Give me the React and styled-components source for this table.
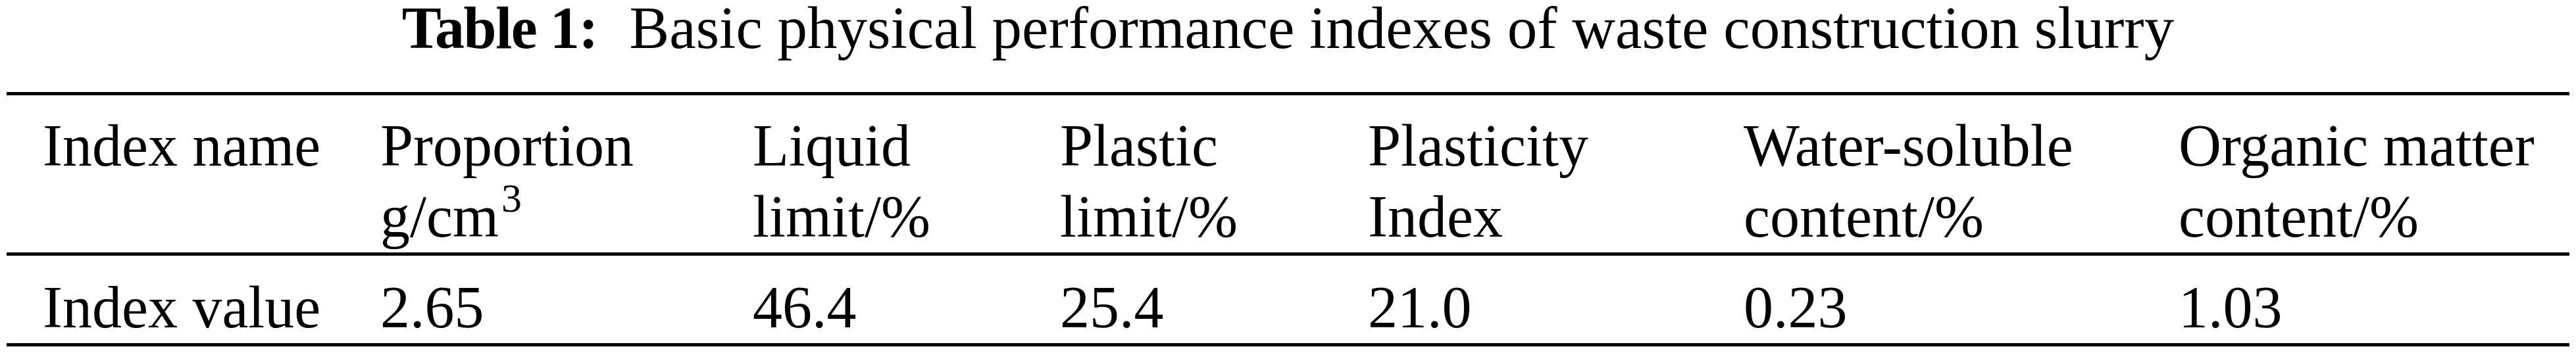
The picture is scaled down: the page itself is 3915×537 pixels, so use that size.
import React from 'react';
import styled, { createGlobalStyle } from 'styled-components';

const GlobalStyle = createGlobalStyle`
  html, body {
    margin: 0;
    padding: 0;
    background: #ffffff;
  }

  body {
    font-family: "Liberation Serif", "Times New Roman", serif;
    color: #000000;
  }
`;

const Page = styled.div`
  width: 3915px;
  height: 537px;
  background: #ffffff;
  overflow: hidden;
`;

const Caption = styled.div`
  font-size: 91px;
  line-height: 86px;
  text-align: center;
  white-space: pre;
  margin-bottom: 54px;
`;

const CaptionLabel = styled.span`
  font-weight: bold;
  font-size: 90px;
  letter-spacing: -1.5px;
  margin-right: 3px;
`;

const Table = styled.div`
  margin: 0 10px;
  border-top: 5px solid #000000;
  border-bottom: 5px solid #000000;
  font-size: 90px;
  line-height: 108px;
`;

const Row = styled.div`
  display: grid;
  grid-template-columns: 513px 566px 467px 468px 571px 661px 1fr;
  padding: ${(p) => p.$top}px 0 0 55px;
  border-bottom: ${(p) => (p.$ruled ? '5px solid #000000' : 'none')};
`;

const Cell = styled.div`
  white-space: nowrap;
`;

const Sup = styled.span`
  font-size: 62px;
  line-height: 0;
  vertical-align: 38px;
  margin-left: 4px;
`;

const header = [
  ['Index name'],
  ['Proportion', <>g/cm<Sup>3</Sup></>],
  ['Liquid', 'limit/%'],
  ['Plastic', 'limit/%'],
  ['Plasticity', 'Index'],
  ['Water-soluble', 'content/%'],
  ['Organic matter', 'content/%'],
];

const values = ['Index value', '2.65', '46.4', '25.4', '21.0', '0.23', '1.03'];

const App = () => {
  return (
    <Page>
      <GlobalStyle />
      <Caption>
        <CaptionLabel>Table 1:</CaptionLabel>
        {'  Basic physical performance indexes of waste construction slurry'}
      </Caption>
      <Table>
        <Row $top={23} $ruled>
          {header.map((lines, i) => (
            <Cell key={i}>
              {lines.map((line, j) => (
                <div key={j}>{line}</div>
              ))}
            </Cell>
          ))}
        </Row>
        <Row $top={25}>
          {values.map((v, i) => (
            <Cell key={i}>{v}</Cell>
          ))}
        </Row>
      </Table>
    </Page>
  );
};

export default App;
